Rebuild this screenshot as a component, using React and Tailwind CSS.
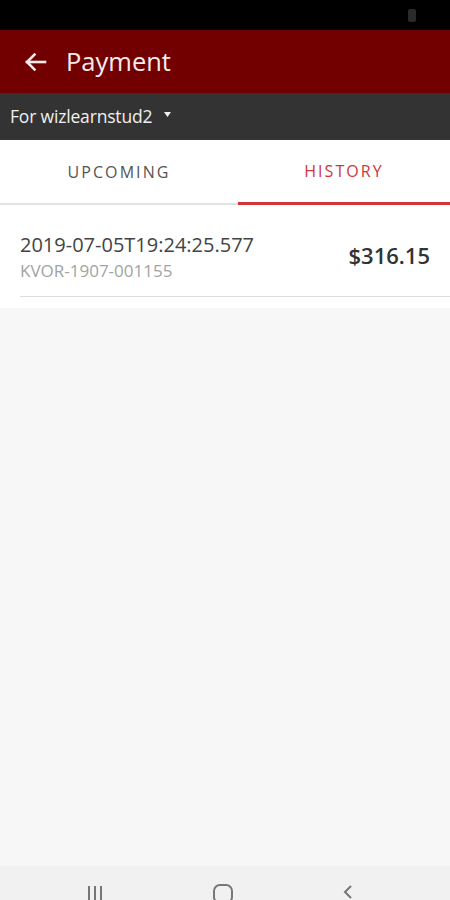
import React from 'react';

const payments = [
  { id: 1, date: '2019-07-05T19:24:25.577', ref: 'KVOR-1907-001155', amount: '$316.15' },
];

const Tab = ({ label, active, className = '' }) => (
  <div
    className={`flex items-center justify-center h-full text-[16px] tracking-[0.13em] ${
      active ? 'text-[#d0353b] border-b-[3px] border-[#d0353b]' : 'text-[#555] border-b-2 border-[#e2e2e2]'
    } ${className}`}
  >
    <span>{label}</span>
  </div>
);

export default function App() {
  return (
    <div
      className="w-[450px] h-[900px] flex flex-col bg-[#f7f7f7] overflow-hidden"
      style={{ fontFamily: '"Open Sans", "Noto Sans", sans-serif' }}
    >
      {/* status bar */}
      <div className="h-[30px] bg-black flex items-center justify-end pr-[34px] shrink-0">
        <div className="w-[8px] h-[13px] rounded-[2px] bg-[#2a2a2a]" />
      </div>

      {/* app bar */}
      <div className="h-[63px] bg-[#720000] flex items-center pl-[24px] shrink-0">
        <svg width="23" height="20" viewBox="0 0 23 20" fill="none" stroke="#f5eaea" strokeWidth="2.6" strokeLinecap="square">
          <path d="M3 10 H21" />
          <path d="M10.5 2.5 L3 10 L10.5 17.5" />
        </svg>
        <span className="ml-[19px] text-[25.5px] text-[#f5ecec] leading-none">Payment</span>
      </div>

      {/* student picker */}
      <div className="h-[47px] bg-[#333333] flex items-center pl-[10px] shrink-0">
        <span className="text-[17.5px] text-[#f0f0f0] tracking-[-0.01em]">For wizlearnstud2</span>
        <svg className="ml-[12px] mb-[4px]" width="7" height="5" viewBox="0 0 7 5">
          <path d="M0 0 H7 L3.5 5 Z" fill="#f0f0f0" />
        </svg>
      </div>

      {/* tabs */}
      <div className="h-[65px] bg-white flex shrink-0">
        <Tab label="UPCOMING" className="w-[238px]" />
        <Tab label="HISTORY" active className="flex-1" />
      </div>

      {/* list */}
      <div className="bg-white pb-[11px]">
        {payments.map((p) => (
          <div key={p.id} className="ml-[20px] pr-[20px] h-[92px] flex items-center border-b border-[#dddddd]">
            <div className="flex-1 flex flex-col pt-[12px]">
              <span className="text-[20px] text-[#444] leading-[28px]">{p.date}</span>
              <span className="text-[17px] text-[#a3a3a3] leading-[24px]">{p.ref}</span>
            </div>
            <span className="pt-[10px] text-[22px] text-[#333] font-semibold">{p.amount}</span>
          </div>
        ))}
      </div>

      <div className="flex-1" />

      {/* system nav */}
      <div className="h-[34px] bg-[#f1f1f1] flex items-start shrink-0 relative">
        <div className="absolute left-[88px] top-[20px] flex gap-[4px]">
          <div className="w-[2px] h-[14px] bg-[#777]" />
          <div className="w-[2px] h-[14px] bg-[#777]" />
          <div className="w-[2px] h-[14px] bg-[#777]" />
        </div>
        <div className="absolute left-[213px] top-[18px] w-[20px] h-[20px] rounded-[7px] border-2 border-[#777]" />
        <svg className="absolute left-[343px] top-[18px]" width="10" height="16" viewBox="0 0 10 16" fill="none" stroke="#777" strokeWidth="2">
          <path d="M8 2 L2 8 L8 14" />
        </svg>
      </div>
    </div>
  );
}
